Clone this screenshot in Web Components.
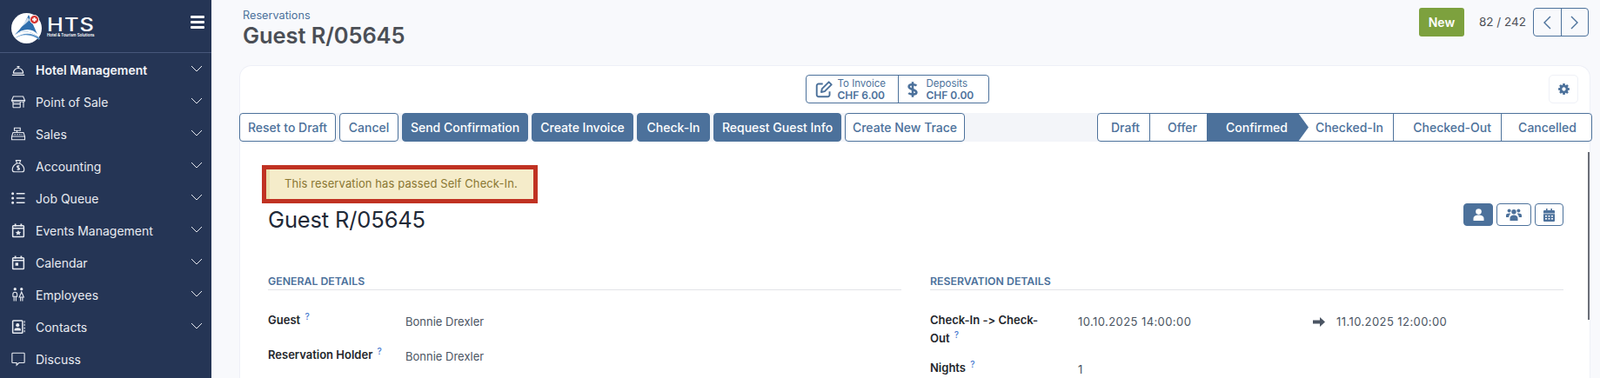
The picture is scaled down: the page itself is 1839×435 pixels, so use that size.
<!doctype html>
<html lang="en">
<title>Guest R/05645</title>
<style>
  html, body { margin: 0; height: 100%; overflow: hidden; }
  body { font-family: Inter, "Liberation Sans", sans-serif; font-size: 13px; background: #f8f9fc; font-variant-ligatures: none; font-feature-settings: "calt" 0; }
  #app { display: flex; height: 435px; }
</style>

<div id="app">
  <hts-sidebar>
    <nav-item icon="bell" strong>Hotel Management</nav-item>
    <nav-item icon="shop">Point of Sale</nav-item>
    <nav-item icon="till">Sales</nav-item>
    <nav-item icon="bag">Accounting</nav-item>
    <nav-item icon="list">Job Queue</nav-item>
    <nav-item icon="event">Events Management</nav-item>
    <nav-item icon="calendar">Calendar</nav-item>
    <nav-item icon="people">Employees</nav-item>
    <nav-item icon="contact">Contacts</nav-item>
    <nav-item icon="chat" leaf>Discuss</nav-item>
  </hts-sidebar>

  <form-view>
    <page-head slot="head" crumb="Reservations" title="Guest R/05645"></page-head>

    <stat-group slot="stats">
      <stat-button icon="edit" label="To Invoice" value="CHF 6.00" style="--w:105px"></stat-button>
      <stat-button icon="dollar" label="Deposits" value="CHF 0.00" style="--w:104px"></stat-button>
    </stat-group>

    <action-btn slot="actions" style="--w:111px">Reset to Draft</action-btn>
    <action-btn slot="actions" style="--w:68px">Cancel</action-btn>
    <action-btn slot="actions" style="--w:145px" primary>Send Confirmation</action-btn>
    <action-btn slot="actions" style="--w:117px" primary>Create Invoice</action-btn>
    <action-btn slot="actions" style="--w:84px" primary>Check-In</action-btn>
    <action-btn slot="actions" style="--w:147px" primary>Request Guest Info</action-btn>
    <action-btn slot="actions" style="--w:138px">Create New Trace</action-btn>

    <status-bar slot="status">
      <status-step style="--w:60px">Draft</status-step>
      <status-step style="--w:66px">Offer</status-step>
      <status-step style="--w:116px" current>Confirmed</status-step>
      <status-step style="--w:110px" after>Checked-In</status-step>
      <status-step style="--w:124px">Checked-Out</status-step>
      <status-step style="--w:103px" last>Cancelled</status-step>
    </status-bar>

    <sheet-alert slot="alert">This reservation has passed Self Check-In.</sheet-alert>

    <span slot="name">Guest R/05645</span>
    <view-switch slot="views"></view-switch>

    <form-group slot="left" heading="General Details" style="--label:158px;--gap:17px;--pad:14px">
      <form-row label="Guest">Bonnie Drexler</form-row>
      <form-row label="Reservation Holder">Bonnie Drexler</form-row>
    </form-group>

    <form-group slot="right" heading="Reservation Details" style="--label:170px;--gap:13px;--pad:30px">
      <form-row label="Check-In -> Check-Out">
        <date-range from="10.10.2025 14:00:00" to="11.10.2025 12:00:00"></date-range>
      </form-row>
      <form-row label="Nights">1</form-row>
    </form-group>
  </form-view>
</div>

<script type="module">
  const ICONS = {
    bell: '<path d="M4 17.500h16M2.500 20.500h19M4.500 17.500a7.500 7.500 0 0 1 15 0M12 10V7.500M10 7.500h4"/>',
    shop: '<path d="M4.500 4h15l2.500 6H2zM2 10c0 1.800 2 2.600 3.400 2h13.200c1.400.6 3.400-.2 3.400-2M4 12v9M20 12v9M4 21h11M15 12v9M4 15.500h11"/>',
    till: '<path d="M6 3h9v4H6zM10 7v3M4 10h16l2 6v5H2v-5zM2 16h20"/><path stroke-dasharray="2 1.600" d="M6 13h12"/>',
    bag: '<path d="M8.500 3.500h7L14 8h-4zM10 8h4c4 2 7 6 7 9.500 0 2.500-1.500 3.500-3.500 3.500h-11C4.500 21 3 20 3 17.500 3 14 6 10 10 8z"/><path d="M14 12.200c-.8-.8-4-1-4 .9 0 2 4 1.200 4 3.100 0 1.800-3.200 1.700-4 .8M12 10.800v7.400"/>',
    list: '<path stroke-width="2" d="M9 5h13M9 12h13M9 19h13"/><path stroke-width="4" stroke-linecap="round" d="M3.500 5h.01M3.500 12h.01M3.500 19h.01"/>',
    event: '<path stroke-width="2" d="M4.500 5h15a1 1 0 0 1 1 1v15a1 1 0 0 1-1 1h-15a1 1 0 0 1-1-1V6a1 1 0 0 1 1-1zM3.500 9h17"/><path stroke-width="2.400" d="M7.500 2v4M16.500 2v4"/><path fill="currentColor" stroke="none" d="M12 11.500l1.300 2.700 3 .4-2.200 2 .6 2.900-2.700-1.400-2.700 1.400.6-2.900-2.200-2 3-.4z"/>',
    calendar: '<path stroke-width="2" d="M4.500 5h15a1 1 0 0 1 1 1v15a1 1 0 0 1-1 1h-15a1 1 0 0 1-1-1V6a1 1 0 0 1 1-1zM3.500 9h17"/><path stroke-width="2.400" d="M7.500 2v4M16.500 2v4"/><path fill="currentColor" stroke="none" d="M7.500 12.500h4.500V17H7.500z"/>',
    people: '<circle cx="7" cy="3.500" r="2.200" fill="currentColor" stroke="none"/><circle cx="17" cy="3.500" r="2.200" fill="currentColor" stroke="none"/><path d="M3.800 15v-3.500a3.200 3.200 0 0 1 6.400 0V15zM5.500 15v7M8.500 15v7M17 8l3.400 8h-6.800zM15.500 16v6M18.500 16v6"/>',
    contact: '<path stroke-width="2" d="M4.500 2.500h13a1 1 0 0 1 1 1v17a1 1 0 0 1-1 1h-13a1 1 0 0 1-1-1v-17a1 1 0 0 1 1-1z"/><path stroke-dasharray="3 1.800" d="M21.500 3v18"/><circle cx="11" cy="9.500" r="2.700" fill="currentColor" stroke="none"/><path fill="currentColor" stroke="none" d="M6 18v-1.500c0-2 2-3 5-3s5 1 5 3V18z"/>',
    chat: '<path d="M3.500 3h17a1 1 0 0 1 1 1v13a1 1 0 0 1-1 1h-7.500L9.500 21.500V18h-6a1 1 0 0 1-1-1V4a1 1 0 0 1 1-1z"/>'
  };

  // small helper, every element below does the same thing
  function shadow(el, html) {
    const root = el.attachShadow({ mode: 'open' });
    root.innerHTML = html;
    return root;
  }

  class HtsSidebar extends HTMLElement {
    connectedCallback() {
      shadow(this, `
        <style>
          :host { display: block; flex: 0 0 243px; background: #253555; color: #e8ebf1; }
          header { display: flex; justify-content: space-between; height: 60px; border-bottom: 1px solid #47577a; }
          .brand { display: flex; gap: 6px; padding: 15px 0 0 13px; }
          .words { display: flex; flex-direction: column; color: #fff; line-height: 1; }
          .hts { font-size: 21px; font-weight: 500; letter-spacing: 1px; width: 56px; transform: scaleX(1.2); transform-origin: left; margin-top: 3px; }
          .sub { font-size: 4.400px; font-weight: 600; margin-top: 0; white-space: nowrap; }
          .burger { width: 16px; margin: 18px 8px 0 0; display: flex; flex-direction: column; gap: 3px; }
          .burger i { display: block; height: 3px; background: #fff; border-radius: 1px; }
          nav { display: flex; flex-direction: column; padding-top: 0.5px; }
        </style>
        <header>
          <div class="brand">
            <svg width="35" height="35" viewBox="0 0 35 35">
              <circle cx="17.500" cy="17.500" r="17.500" fill="#fff"/>
              <path d="M20 2 32 29 C25 21 14 19 4 25 12 17 16 10 20 2Z" fill="#2f6fae"/>
              <path d="M4 25C14 19 25 21 32 29 L31 25C24 17 14 17 4 25Z" fill="#fff"/>
              <path d="M3 30C12 23 24 24 32 31 L33 29C25 23 14 21 3 30Z" fill="#5b93c8"/>
              <path d="M3 22C10 15 15 11 19 5 L21 8C15 14 9 18 3 22Z" fill="#fff" opacity=".75"/>
              <circle cx="26.500" cy="7.500" r="5" fill="#d5322f" stroke="#fff" stroke-width="1"/>
              <path d="M26.500 5v5M24 7.500h5" stroke="#fff" stroke-width="1.800"/>
            </svg>
            <div class="words"><span class="hts">HTS</span><span class="sub">Hotel &amp; Tourism Solutions</span></div>
          </div>
          <div class="burger"><i></i><i></i><i></i></div>
        </header>
        <nav><slot></slot></nav>`);
    }
  }

  class NavItem extends HTMLElement {
    connectedCallback() {
      const chevron = this.hasAttribute('leaf') ? '' :
        '<svg class="chev" width="14" height="8" viewBox="0 0 14 8"><path d="M1 1l6 6 6-6" fill="none" stroke="currentColor" stroke-width="1"/></svg>';
      shadow(this, `
        <style>
          :host { display: flex; align-items: center; height: 37px; padding-left: 12px; color: #e8ebf1; font-size: 14px; }
          :host([strong]) { font-weight: 600; color: #f2f4f8; }
          svg.icon { width: 18px; height: 18px; flex: none; fill: none; stroke: currentColor; stroke-width: 1.500; margin-right: 11px; }
          span { flex: 1; white-space: nowrap; }
          .chev { margin-right: 10px; flex: none; margin-top: -3px; }
        </style>
        <svg class="icon" viewBox="0 0 24 24">${ICONS[this.getAttribute('icon')]}</svg>
        <span><slot></slot></span>${chevron}`);
    }
  }

  class FormView extends HTMLElement {
    connectedCallback() {
      shadow(this, `
        <style>
          :host { display: flex; flex-direction: column; flex: 1; min-width: 0; }
          .top { height: 75px; flex: none; }
          .card { flex: 1; margin: 0 11px 0 32px; background: #fff; border: 1px solid #eef0f7; border-bottom: 0; border-radius: 14px 14px 0 0; min-height: 0; position: relative; }
          .stats { display: flex; height: 54px; box-sizing: border-box; padding-top: 10px; padding-right: 13px; }
          .stats .mid { flex: 1; display: flex; justify-content: center; padding-left: 6px; }
          .gear { width: 32px; height: 31px; border: 1px solid #eff1f7; border-radius: 5px; display: flex; align-items: center; justify-content: center; }
          .bar { display: flex; justify-content: space-between; background: #f3f5f9; height: 33px; margin: 0 -3px 0 -1px; }
          .actions { display: flex; gap: 4px; }
          .sheet { padding: 32px 30px 0 32px; }
          .namerow { display: flex; justify-content: space-between; height: 40px; margin-top: 5px; }
          .name { font-size: 25.500px; line-height: 38px; color: #1f2937; letter-spacing: -0.15px; }
          .cols { display: grid; grid-template-columns: 1fr 1fr; column-gap: 33px; margin-top: 40px; }
          .scroll { position: absolute; right: 0; top: 99px; width: 2px; height: 193px; background: #6b6f78; }
        </style>
        <div class="top"><slot name="head"></slot></div>
        <div class="card">
          <div class="stats">
            <div class="mid"><slot name="stats"></slot></div>
            <div class="gear">
              <svg width="15" height="15" viewBox="0 0 1792 1792"><path fill="#4c719b" d="M1152 896q0-106-75-181t-181-75-181 75-75 181 75 181 181 75 181-75 75-181zm512-109v222q0 12-8 23t-20 13l-185 28q-19 54-39 91 35 50 107 138 10 12 10 25t-9 23q-27 37-99 108t-94 71q-12 0-26-9l-138-108q-44 23-91 38-16 136-29 186-7 28-36 28h-222q-14 0-24.500-8.500t-11.500-21.500l-28-184q-49-16-90-37l-141 107q-10 9-25 9-14 0-25-11-126-114-165-168-7-10-7-23 0-12 8-23 15-21 51-66.500t54-70.500q-27-50-41-99l-183-27q-13-2-21-12.500t-8-23.500v-222q0-12 8-23t19-13l186-28q14-46 39-92-40-57-107-138-10-12-10-24 0-10 9-23 26-36 98.500-107.500t94.500-71.500q13 0 26 10l138 107q44-23 91-38 16-136 29-186 7-28 36-28h222q14 0 24.500 8.500t11.500 21.500l28 184q49 16 90 37l142-107q9-9 24-9 13 0 25 10 129 119 165 170 7 8 7 22 0 12-8 23-15 21-51 66.500t-54 70.500q26 50 41 98l183 28q13 2 21 12.500t8 23.500z"/></svg>
            </div>
          </div>
          <div class="bar">
            <div class="actions"><slot name="actions"></slot></div>
            <slot name="status"></slot>
          </div>
          <div class="sheet">
            <slot name="alert"></slot>
            <div class="namerow">
              <div class="name"><slot name="name"></slot></div>
              <slot name="views"></slot>
            </div>
            <div class="cols"><slot name="left"></slot><slot name="right"></slot></div>
          </div>
          <div class="scroll"></div>
        </div>`);
    }
  }

  class PageHead extends HTMLElement {
    connectedCallback() {
      shadow(this, `
        <style>
          :host { display: flex; justify-content: space-between; padding: 9px 13px 0 36px; }
          .crumb { font-size: 12.700px; line-height: 18px; color: #4c719b; }
          .title { font-size: 25.500px; line-height: 28px; font-weight: 600; color: #4b4f56; letter-spacing: -0.1px; }
          .right { display: flex; align-items: flex-start; }
          .new { width: 52px; height: 33px; background: #7da13e; color: #fff; font-weight: 600; font-size: 14px; border-radius: 3px; display: flex; align-items: center; justify-content: center; }
          .count { margin: 0 8px 0 17px; line-height: 33px; font-size: 13.500px; color: #4b4f56; }
          .pager { display: flex; width: 64px; height: 33px; box-sizing: border-box; border: 1px solid #4c719b; border-radius: 4px; }
          .pager div { flex: 1; display: flex; align-items: center; justify-content: center; }
          .pager div + div { border-left: 1px solid #4c719b; }
          path { fill: none; stroke: #4c719b; stroke-width: 1.400; }
        </style>
        <div>
          <div class="crumb">${this.getAttribute('crumb')}</div>
          <div class="title">${this.getAttribute('title')}</div>
        </div>
        <div class="right">
          <div class="new">New</div>
          <div class="count">82 / 242</div>
          <div class="pager">
            <div><svg width="10" height="16" viewBox="0 0 10 16"><path d="M9 1L2 8l7 7"/></svg></div>
            <div><svg width="10" height="16" viewBox="0 0 10 16"><path d="M1 1l7 7-7 7"/></svg></div>
          </div>
        </div>`);
    }
  }

  class StatGroup extends HTMLElement {
    connectedCallback() {
      shadow(this, `
        <style>
          :host { display: flex; height: 33px; box-sizing: border-box; border: 1px solid #4c719b; border-radius: 4px; }
        </style>
        <slot></slot>`);
    }
  }

  class StatButton extends HTMLElement {
    connectedCallback() {
      const icons = {
        edit: '<svg width="20" height="20" viewBox="0 0 23 23" fill="none" stroke="#4c719b" stroke-width="2.200"><path d="M10 4H4.500A2.500 2.500 0 0 0 2 6.500v12A2.500 2.500 0 0 0 4.500 21h12a2.500 2.500 0 0 0 2.500-2.500V14"/><path d="M8 15l1-4.500L18 1.500 21.500 5 12.500 14z" stroke-linejoin="round"/></svg>',
        dollar: '<svg width="12" height="22" viewBox="0 0 15 24" fill="none" stroke="#4c719b" stroke-width="3.200"><path d="M13 6.500C11 4.500 2 3.800 2 8c0 4.500 11 3.500 11 8.200 0 4-9 3.300-11.500 1"/><path d="M7.500 1v22"/></svg>'
      };
      shadow(this, `
        <style>
          :host { display: flex; align-items: center; width: var(--w); box-sizing: border-box; padding-left: 10px; gap: 6px; color: #4c719b; }
          :host([icon=dollar]) { padding-left: 10px; gap: 10px; border-left: 1px solid #4c719b; }
          .txt { display: flex; flex-direction: column; line-height: 14px; white-space: nowrap; }
          .l { font-size: 11.500px; }
          .v { font-size: 12px; font-weight: 600; }
          svg { flex: none; }
        </style>
        ${icons[this.getAttribute('icon')]}
        <div class="txt"><span class="l">${this.getAttribute('label')}</span><span class="v">${this.getAttribute('value')}</span></div>`);
    }
  }

  class ActionBtn extends HTMLElement {
    connectedCallback() {
      shadow(this, `
        <style>
          :host { display: flex; align-items: center; justify-content: center; width: var(--w); height: 33px; box-sizing: border-box; border: 1px solid #4c719b; border-radius: 4px; background: #fff; color: #4c719b; font-size: 14px; font-weight: 500; white-space: nowrap; }
          :host([primary]) { background: #4c719b; color: #fff; }
        </style>
        <slot></slot>`);
    }
  }

  class StatusBar extends HTMLElement {
    connectedCallback() {
      shadow(this, `
        <style>
          :host { display: flex; height: 33px; box-sizing: border-box; border: 1px solid #4c719b; border-radius: 4px; background: #fff; }
        </style>
        <slot></slot>`);
    }
  }

  class StatusStep extends HTMLElement {
    connectedCallback() {
      shadow(this, `
        <style>
          :host { display: flex; align-items: center; justify-content: flex-end; width: var(--w); box-sizing: border-box; padding-right: 11px; border-right: 1px solid #4c719b; color: #4c719b; font-size: 14px; font-weight: 500; white-space: nowrap; }
          :host([last]) { border-right: 0; padding-right: 17px; }
          :host([current]) { background: #4c719b; color: #fff; border-right: 0; padding-right: 24px; margin: -1px -12px -1px 0; clip-path: polygon(0 0, calc(100% - 12px) 0, 100% 50%, calc(100% - 12px) 100%, 0 100%); position: relative; z-index: 1; }
        </style>
        <slot></slot>`);
    }
  }

  class SheetAlert extends HTMLElement {
    connectedCallback() {
      shadow(this, `
        <style>
          :host { display: block; width: 307px; height: 34px; margin-left: -2px; box-sizing: border-box; padding-left: 17px; line-height: 33px; background: #f5ecca; border-left: 4px solid #ebe0ad; color: #8a7732; font-size: 13px; letter-spacing: 0.1px; white-space: nowrap; outline: 5px solid #c03222; }
        </style>
        <slot></slot>`);
    }
  }

  class ViewSwitch extends HTMLElement {
    connectedCallback() {
      shadow(this, `
        <style>
          :host { display: flex; gap: 4px; height: 26px; }
          div { height: 26px; box-sizing: border-box; border: 1px solid #4c719b; border-radius: 4px; display: flex; align-items: center; justify-content: center; color: #4c719b; }
          .on { background: #4c719b; color: #fff; width: 34px; }
          svg { fill: currentColor; }
        </style>
        <div class="on"><svg width="13" height="14" viewBox="0 0 13 14"><circle cx="6.500" cy="3.600" r="3.300"/><path d="M.5 14v-2.500C.5 8.800 3 7.600 6.500 7.600s6 1.200 6 3.900V14z"/></svg></div>
        <div style="width:40px"><svg width="18" height="14" viewBox="0 0 18 14"><circle cx="9" cy="3.800" r="2.700"/><circle cx="3.600" cy="2.600" r="2"/><circle cx="14.400" cy="2.600" r="2"/><path d="M4.500 14v-3c0-2 2-3.400 4.500-3.400s4.500 1.400 4.500 3.400v3zM0 10V7.800C0 6.300 1.500 5.500 3.600 5.500c.7 0 1.200.1 1.700.3C4 7 3.300 8.200 3.200 10zM18 10V7.800c0-1.500-1.500-2.300-3.600-2.300-.7 0-1.200.1-1.700.3 1.300 1.200 2 2.400 2.100 4.200z"/></svg></div>
        <div style="width:33px"><svg width="13" height="15" viewBox="0 0 13 15"><path d="M3 0h1.600v2h3.800V0H10v2h2a1 1 0 0 1 1 1v2.400H0V3a1 1 0 0 1 1-1h2z"/><path fill-rule="evenodd" d="M0 6.300h13V14a1 1 0 0 1-1 1H1a1 1 0 0 1-1-1zM2 8v1.500h2V8zm3.500 0v1.500h2V8zM9 8v1.500h2V8zM2 11v1.500h2V11zm3.500 0v1.500h2V11zM9 11v1.500h2V11z"/></svg></div>`);
    }
  }

  class FormGroup extends HTMLElement {
    connectedCallback() {
      shadow(this, `
        <style>
          :host { display: block; min-width: 0; }
          h3 { margin: 0; font-size: 12.300px; line-height: 18px; font-weight: 600; text-transform: uppercase; color: #4c719b; padding-top: 1px; border-bottom: 1px solid #e2e4e8; }
          .rows { display: flex; flex-direction: column; gap: var(--gap); padding-top: 24px; }
        </style>
        <h3>${this.getAttribute('heading')}</h3>
        <div class="rows"><slot></slot></div>`);
    }
  }

  class FormRow extends HTMLElement {
    connectedCallback() {
      const label = this.getAttribute('label').replace('>', '&gt;');
      shadow(this, `
        <style>
          :host { display: grid; grid-template-columns: var(--label) 1fr; line-height: 21px; font-size: 13px; }
          label { font-weight: 600; color: #23262b; padding-right: var(--pad); }
          sup { color: #4a7bd0; font-size: 10px; font-weight: 500; line-height: 0; margin-left: 2px; }
          .val { color: #4b5563; padding-top: 2px; }
        </style>
        <label>${label} <sup>?</sup></label>
        <div class="val"><slot></slot></div>`);
    }
  }

  class DateRange extends HTMLElement {
    connectedCallback() {
      shadow(this, `
        <style>
          :host { display: grid; grid-template-columns: 270px 27px 1fr; align-items: center; }
          span { letter-spacing: 0.42px; }
          svg { display: block; }
        </style>
        <span>${this.getAttribute('from')}</span>
        <svg width="14" height="11" viewBox="0 0 14 11"><path fill="#4b5563" d="M0 3.500h8V0l6 5.500-6 5.500V7.500H0z"/></svg>
        <span>${this.getAttribute('to')}</span>`);
    }
  }

  customElements.define('hts-sidebar', HtsSidebar);
  customElements.define('nav-item', NavItem);
  customElements.define('form-view', FormView);
  customElements.define('page-head', PageHead);
  customElements.define('stat-group', StatGroup);
  customElements.define('stat-button', StatButton);
  customElements.define('action-btn', ActionBtn);
  customElements.define('status-bar', StatusBar);
  customElements.define('status-step', StatusStep);
  customElements.define('sheet-alert', SheetAlert);
  customElements.define('view-switch', ViewSwitch);
  customElements.define('form-group', FormGroup);
  customElements.define('form-row', FormRow);
  customElements.define('date-range', DateRange);
</script>
</html>
